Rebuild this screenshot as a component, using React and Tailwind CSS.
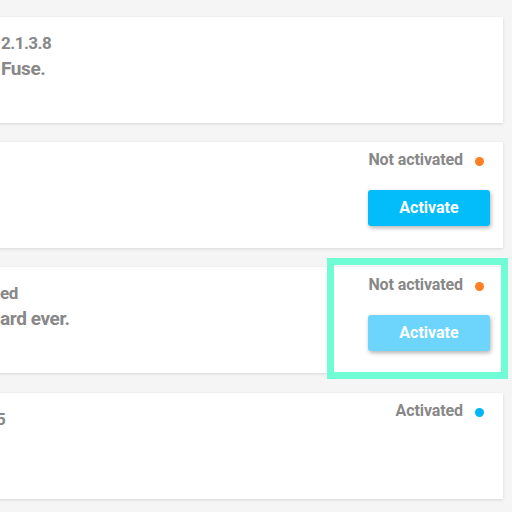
export default function App() {
  const font = { fontFamily: "Roboto, 'Liberation Sans', sans-serif" };
  return (
    <div className="w-[512px] h-[512px] overflow-hidden bg-[#f5f5f5] relative" style={font}>
      <div className="flex flex-col gap-[19px] pt-[17px] ml-[-20px] w-[523px]">
        {/* Card 1 */}
        <div className="h-[106px] bg-white shadow-[0_1px_3px_rgba(0,0,0,0.12)] flex pl-[21px]">
          <div className="flex flex-col pt-[14px] text-[#888888] font-bold">
            <div className="text-[17px] leading-[24px] tracking-[-0.5px]">2.1.3.8</div>
            <div className="text-[19px] leading-[28px] tracking-[-0.4px]">Fuse.</div>
          </div>
        </div>
        {/* Card 2 */}
        <div className="h-[106px] bg-white shadow-[0_1px_3px_rgba(0,0,0,0.12)] flex justify-end pr-[13px]">
          <div className="flex flex-col items-end pt-[6px]">
            <div className="flex items-center h-[24px] pr-[6px] gap-[12px] text-[#888888] font-bold text-[16px]">
              <span className="tracking-[-0.1px]">Not activated</span>
              <span className="w-[9px] h-[9px] rounded-full bg-[#ff7f22] mt-[2px]"></span>
            </div>
            <div className="mt-[18px] w-[122px] h-[36px] rounded-[3px] bg-[#03bdfb] shadow-[1px_2px_4px_rgba(0,0,0,0.3)] flex items-center justify-center text-white font-bold text-[16px]">
              Activate
            </div>
          </div>
        </div>
        {/* Card 3 */}
        <div className="relative h-[106px] bg-white shadow-[0_1px_3px_rgba(0,0,0,0.12)] flex justify-between pr-[13px]">
          <div className="flex flex-col pt-[14px] pl-[20px] text-[#888888] font-bold">
            <div className="text-[17px] leading-[24px] tracking-[-0.5px]">ed</div>
            <div className="text-[19px] leading-[28px] tracking-[-0.4px]">ard ever.</div>
          </div>
          <div className="flex flex-col items-end pt-[6px]">
            <div className="flex items-center h-[24px] pr-[6px] gap-[12px] text-[#888888] font-bold text-[16px]">
              <span className="tracking-[-0.1px]">Not activated</span>
              <span className="w-[9px] h-[9px] rounded-full bg-[#ff7f22] mt-[2px]"></span>
            </div>
            <div className="mt-[18px] w-[122px] h-[36px] rounded-[3px] bg-[#6dd5fb] shadow-[1px_2px_4px_rgba(0,0,0,0.3)] flex items-center justify-center text-white font-bold text-[16px]">
              Activate
            </div>
          </div>
          <div className="absolute top-[-9px] right-[-5px] w-[181px] h-[121px] border-[7px] border-[#70fdd6]"></div>
        </div>
        {/* Card 4 */}
        <div className="mt-[1px] h-[106px] bg-white shadow-[0_1px_3px_rgba(0,0,0,0.12)] flex justify-between pr-[13px]">
          <div className="flex flex-col pt-[14px] pl-[16px] text-[#888888] font-bold">
            <div className="text-[17px] leading-[24px]">5</div>
          </div>
          <div className="flex flex-col items-end pt-[6px]">
            <div className="flex items-center h-[24px] pr-[6px] gap-[12px] text-[#888888] font-bold text-[16px]">
              <span className="tracking-[-0.1px]">Activated</span>
              <span className="w-[9px] h-[9px] rounded-full bg-[#03b6f8] mt-[2px]"></span>
            </div>
          </div>
        </div>
      </div>
    </div>
  );
}
